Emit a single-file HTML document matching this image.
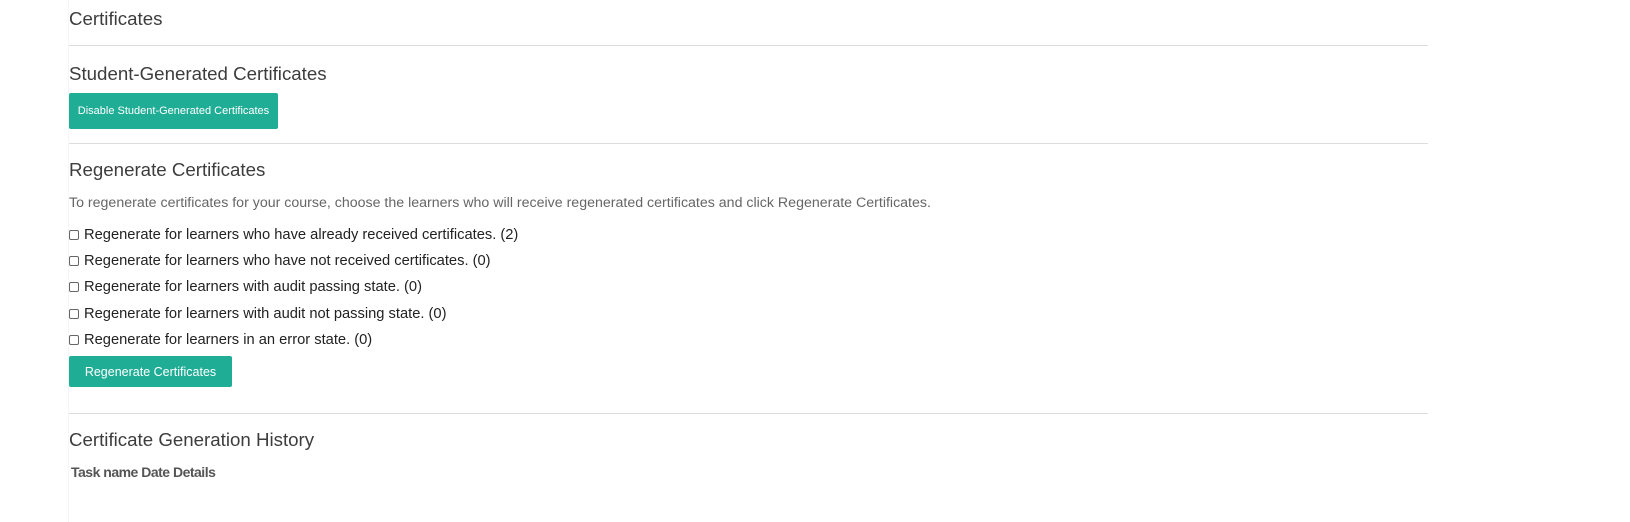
<!DOCTYPE html>
<html><head><style>
body{margin:0;background:#fff;font-family:"Liberation Sans",sans-serif;color:#333;width:1630px;height:522px;overflow:hidden;position:relative}
.w{position:absolute;left:68px;width:1359px;top:0;height:522px;border-left:1px solid #f6f6f6}
.a{position:absolute;left:0;white-space:nowrap}
h{position:absolute;left:0;font-size:18.7px;color:#3d3d3d;white-space:nowrap;line-height:20px}
.hr{position:absolute;left:0;width:1359px;height:1px;background:#ddd}
.btn{position:absolute;left:0;background:#20ad96;color:#fff;border-radius:2px;display:flex;align-items:center;justify-content:center}
.cb{position:absolute;left:0;font-size:14.7px;color:#222;display:flex;align-items:center;white-space:nowrap;line-height:16px}
.cb i{display:inline-block;width:8px;height:8px;border:1px solid #666;border-radius:2px;margin-right:5px}
</style></head><body><div class="w">
<h style="top:9px">Certificates</h>
<div class="hr" style="top:45px"></div>
<h style="top:64px">Student-Generated Certificates</h>
<div class="btn" style="top:93px;width:209px;height:36px;font-size:11px">Disable Student-Generated Certificates</div>
<div class="hr" style="top:143px"></div>
<h style="top:160px">Regenerate Certificates</h>
<div class="a" style="top:195px;font-size:14.2px;color:#666">To regenerate certificates for your course, choose the learners who will receive regenerated certificates and click Regenerate Certificates.</div>
<div class="cb" style="top:227px"><i></i>Regenerate for learners who have already received certificates. (2)</div>
<div class="cb" style="top:253px"><i></i>Regenerate for learners who have not received certificates. (0)</div>
<div class="cb" style="top:279px"><i></i>Regenerate for learners with audit passing state. (0)</div>
<div class="cb" style="top:306px"><i></i>Regenerate for learners with audit not passing state. (0)</div>
<div class="cb" style="top:332px"><i></i>Regenerate for learners in an error state. (0)</div>
<div class="btn" style="top:356px;width:163px;height:31px;font-size:12.5px">Regenerate Certificates</div>
<div class="hr" style="top:413px"></div>
<h style="top:430px">Certificate Generation History</h>
<div class="a" style="top:464px;left:2px;font-size:14px;font-weight:bold;color:#555;letter-spacing:-0.5px">Task name Date Details</div>
</div></body></html>
